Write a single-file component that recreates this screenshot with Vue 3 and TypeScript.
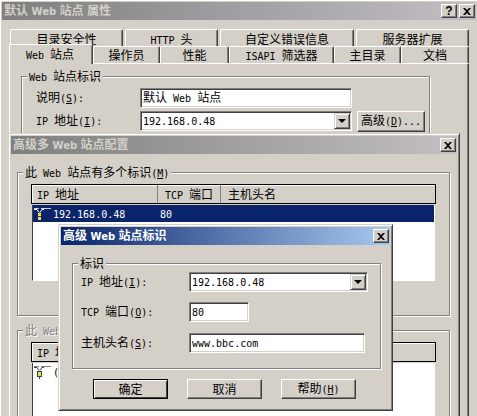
<template>
  <div class="desk">
    <!-- properties sheet, bottom of the stack -->
    <div class="win sheet">
      <div class="title">
        <span class="cap"><T t="默认 Web 站点 属性" /></span>
        <div class="capbtns">
          <button class="capbtn q">?</button>
          <button class="capbtn"><svg width="8" height="7" viewBox="0 0 8 7"><path d="M0 0h2l2 2 2-2h2L5 3.5 8 7H6L4 5 2 7H0l3-3.5z" /></svg></button>
        </div>
      </div>
      <div class="tabrow top">
        <div v-for="t in topTabs" :key="t.t" class="tab" :style="{ width: t.w + 'px' }"><T :t="t.t" /></div>
      </div>
      <div class="tabrow low">
        <div v-for="t in lowTabs" :key="t.t" class="tab" :class="{ on: t.on }" :style="{ width: t.w + 'px' }"><T :t="t.t" /></div>
      </div>
      <div class="panel">
        <fieldset class="grp sitegrp">
          <legend><T t="Web 站点标识" /></legend>
          <div class="form">
            <div class="frow">
              <label class="lbl"><T t="说明(&S):" /></label>
              <div class="field w212"><T t="默认 Web 站点" /></div>
            </div>
            <div class="frow">
              <label class="lbl"><T t="IP 地址(&I):" /></label>
              <div class="field combo w212">
                <T t="192.168.0.48" />
                <span class="drop"><i class="arrow"></i></span>
              </div>
              <button class="btn adv"><T t="高级(&D)..." /></button>
            </div>
          </div>
        </fieldset>
      </div>
    </div>

    <!-- multiple identities dialog -->
    <div class="win multi">
      <div class="title">
        <span class="cap"><T t="高级多 Web 站点配置" /></span>
        <div class="capbtns">
          <button class="capbtn"><svg width="8" height="7" viewBox="0 0 8 7"><path d="M0 0h2l2 2 2-2h2L5 3.5 8 7H6L4 5 2 7H0l3-3.5z" /></svg></button>
        </div>
      </div>
      <fieldset class="grp listgrp">
        <legend><T t="此 Web 站点有多个标识(&M)" /></legend>
        <div class="list">
          <div class="lhead">
            <span class="hc c1"><T t="IP 地址" /></span>
            <span class="hc c2"><T t="TCP 端口" /></span>
            <span class="hc c3"><T t="主机头名" /></span>
          </div>
          <div class="lbody b1">
            <div class="lrow sel">
              <svg class="plug" width="19" height="14" viewBox="0 0 19 14"><path d="M1 1.5h5M8 1.5h10" stroke="#d4d0c8" fill="none" /><path d="M1 2.5h3l2 3M11 2.5H9L7 5.5" stroke="#fff" fill="none" /><rect x="5" y="6" width="3" height="7" fill="#e8dc50" /><path d="M5 9.5h3" stroke="#404040" /></svg>
              <span class="cell1"><T t="192.168.0.48" /></span>
              <span class="cell2"><T t="80" /></span>
            </div>
          </div>
        </div>
      </fieldset>
      <fieldset class="grp listgrp2">
        <legend class="off"><T t="此 Web" /></legend>
        <div class="list">
          <div class="lhead">
            <span class="hc c1"><T t="IP 地址" /></span>
          </div>
          <div class="lbody b2">
            <div class="lrow">
              <svg class="plug" width="19" height="14" viewBox="0 0 19 14"><path d="M1 1.5h5M8 1.5h10" stroke="#808080" fill="none" /><path d="M1 2.5h3l2 3M11 2.5H9L7 5.5" stroke="#404040" fill="none" /><rect x="4.5" y="6.5" width="4" height="5" fill="#e8dc50" stroke="#404040" /><path d="M6.500 12v2" stroke="#404040" /></svg>
              <span class="cell1"><T t="(" /></span>
            </div>
          </div>
        </div>
      </fieldset>
    </div>

    <!-- identity dialog on top -->
    <div class="win ident">
      <div class="title blue">
        <span class="cap"><T t="高级 Web 站点标识" /></span>
        <div class="capbtns">
          <button class="capbtn"><svg width="8" height="7" viewBox="0 0 8 7"><path d="M0 0h2l2 2 2-2h2L5 3.5 8 7H6L4 5 2 7H0l3-3.5z" /></svg></button>
        </div>
      </div>
      <fieldset class="grp idgrp">
        <legend><T t="标识" /></legend>
        <div class="idform">
          <div class="frow">
            <label class="lbl2"><T t="IP 地址(&I):" /></label>
            <div class="field combo w179">
              <T t="192.168.0.48" />
              <span class="drop"><i class="arrow"></i></span>
            </div>
          </div>
          <div class="frow">
            <label class="lbl2"><T t="TCP 端口(&O):" /></label>
            <div class="field w59"><T t="80" /></div>
          </div>
          <div class="frow last">
            <label class="lbl2"><T t="主机头名(&S):" /></label>
            <div class="field w176"><T t="www.bbc.com" /></div>
          </div>
        </div>
      </fieldset>
      <div class="actions">
        <button class="btn act def"><T t="确定" /></button>
        <button class="btn act"><T t="取消" /></button>
        <button class="btn act"><T t="帮助(&H)" /></button>
      </div>
    </div>
  </div>
</template>

<script setup lang="ts">
import { h } from 'vue'

// SimSun look: half-width latin runs get their own span, & marks the access key
const T = (p: { t: string }) =>
  p.t.split(/([ -~]+)/).filter(Boolean).map((s) =>
    /^[ -~]/.test(s)
      ? h('span', { class: 'l' }, s.split(/&(.)/).map((c, i) => (i % 2 ? h('u', c) : c)))
      : s
  )
T.props = ['t']

const topTabs = [
  { t: '目录安全性', w: 113 },
  { t: 'HTTP 头', w: 93 },
  { t: '自定义错误信息', w: 134 },
  { t: '服务器扩展', w: 113 }
]
const lowTabs = [
  { t: 'Web 站点', w: 84, on: true },
  { t: '操作员', w: 67 },
  { t: '性能', w: 69 },
  { t: 'ISAPI 筛选器', w: 105 },
  { t: '主目录', w: 67 },
  { t: '文档', w: 68 }
]
</script>

<style>
body { margin: 0; background: #d4d0c8; }
.l { font-family: "DejaVu Sans Mono", "Liberation Mono", monospace; font-size: 10px; white-space: pre; }
.cap .l { font-family: "DejaVu Sans", sans-serif; font-size: 10px; font-weight: bold; }
</style>

<style scoped>
.desk { position: relative; width: 477px; height: 416px; overflow: hidden; background: #d4d0c8; font: 12px/14px "Noto Sans CJK SC", sans-serif; color: #000; }
.win { position: absolute; box-sizing: border-box; background: #d4d0c8; border: 1px solid; border-color: #d4d0c8 #404040 #404040 #d4d0c8; box-shadow: inset 1px 1px 0 #fff, inset -1px -1px 0 #808080; padding: 2px; }
.sheet { left: -1px; top: -1px; width: 480px; height: 420px; }
.multi { left: 8px; top: 133px; width: 452px; height: 300px; }
.ident { left: 58px; top: 224px; width: 335px; height: 187px; }

.title { height: 18px; display: flex; align-items: center; justify-content: space-between; padding: 0 1px 0 2px; background: linear-gradient(90deg, #808080, #c2bec2); color: #d4d0c8; }
.title.blue { background: linear-gradient(90deg, #0a246a, #a6caf0); color: #fff; }
.cap { font-weight: bold; white-space: pre; }
.capbtns { display: flex; gap: 2px; }
.capbtn { box-sizing: border-box; width: 16px; height: 14px; padding: 0; display: flex; align-items: center; justify-content: center; background: #d4d0c8; border: 1px solid; border-color: #fff #404040 #404040 #fff; box-shadow: inset -1px -1px 0 #808080; }
.capbtn.q { font: bold 12px/12px "Liberation Sans", sans-serif; }

.tabrow { display: flex; }
.tabrow.top { margin: 9px 0 0 8px; gap: 2px; }
.tabrow.low { margin-left: 7px; height: 17px; align-items: flex-end; }
.tab { box-sizing: border-box; height: 17px; text-align: center; line-height: 17px; white-space: pre; border-top: 1px solid #fff; border-left: 1px solid #fff; border-right: 1px solid #404040; border-radius: 2px 2px 0 0; box-shadow: inset -1px 0 0 #808080; }
.low .tab { line-height: 15px; }
.low .tab.on { position: relative; height: 20px; margin-bottom: -1px; padding-right: 2px; line-height: 17px; z-index: 1; background: #d4d0c8; }
.panel { box-sizing: border-box; margin-left: 7px; width: 460px; height: 380px; padding: 5px 0 0 11px; border-top: 1px solid #fff; border-left: 1px solid #fff; border-right: 1px solid #404040; box-shadow: inset -1px 0 0 #808080; }

.grp { margin: 0; padding: 0; min-width: 0; border: 1px solid #808080; box-shadow: inset 1px 1px 0 #fff, 1px 1px 0 #fff; }
.grp legend { margin-left: 5px; padding: 0 2px; height: 14px; background: #d4d0c8; white-space: pre; }
.grp legend.off { color: #808080; text-shadow: 1px 1px 0 #fff; }
.sitegrp { width: 407px; height: 130px; }
.form { padding: 5px 0 0 14px; display: flex; flex-direction: column; gap: 3px; }
.frow { display: flex; align-items: center; height: 20px; }
.lbl { width: 104px; white-space: pre; }
.lbl2 { width: 108px; white-space: pre; }

.field { box-sizing: border-box; height: 20px; padding: 1px 0 0 2px; background: #fff; white-space: pre; line-height: 14px; border: 1px solid; border-color: #808080 #fff #fff #808080; box-shadow: inset 1px 1px 0 #404040, inset -1px -1px 0 #d4d0c8; }
.combo { position: relative; }
.w212 { width: 212px; }
.w179 { width: 179px; }
.w59 { width: 60px; }
.w176 { width: 176px; }
.drop { position: absolute; right: 1px; top: 1px; box-sizing: border-box; width: 16px; height: 16px; display: flex; align-items: center; justify-content: center; background: #d4d0c8; border: 1px solid; border-color: #d4d0c8 #404040 #404040 #d4d0c8; box-shadow: inset 1px 1px 0 #fff, inset -1px -1px 0 #808080; }
.arrow { width: 0; height: 0; border: 4px solid transparent; border-top: 4px solid #000; border-bottom: 0; }

.btn { box-sizing: border-box; padding: 0; background: #d4d0c8; color: #000; font: inherit; white-space: pre; border: 1px solid; border-color: #fff #404040 #404040 #fff; box-shadow: inset -1px -1px 0 #808080; }
.adv { width: 68px; height: 21px; margin-left: 5px; }

.listgrp { margin: 11px 0 0 6px; width: 431px; height: 149px; }
.listgrp2 { margin: 7px 0 0 6px; width: 431px; height: 200px; }
.list { margin: 5px 0 0 13px; width: 405px; }
.lhead { box-sizing: border-box; height: 20px; display: flex; border: 1px solid #000; box-shadow: inset 1px 1px 0 #fff; line-height: 18px; }
.hc { box-sizing: border-box; padding-left: 5px; white-space: pre; height: 18px; }
.c1 { width: 126px; border-right: 1px solid #808080; }
.c2 { width: 63px; border-right: 1px solid #808080; padding-left: 7px; }
.c3 { padding-left: 7px; }
.lbody { margin: 0 1px; background: #fff; border-left: 1px solid #404040; border-right: 1px solid #fff; border-bottom: 1px solid #fff; }
.b1 { height: 75px; }
.b2 { height: 120px; }
.lrow { display: flex; align-items: center; height: 17px; margin-top: 1px; white-space: pre; }
.lrow.sel { background: #0a246a; color: #fff; }
.plug { flex: none; margin: 0 1px 0 0; }
.cell1 { width: 105px; }
.cell2 { padding-left: 2px; }

.idgrp { margin: 11px 0 0 11px; width: 307px; height: 111px; }
.idform { padding: 2px 0 0 8px; display: flex; flex-direction: column; gap: 10px; }
.frow.last { margin-top: 1px; }
.actions { display: flex; gap: 19px; margin: 10px 0 0 32px; }
.act { width: 75px; height: 20px; }
.act.def { border-color: #000; box-shadow: inset 1px 1px 0 #fff, inset -1px -1px 0 #404040; }
</style>
